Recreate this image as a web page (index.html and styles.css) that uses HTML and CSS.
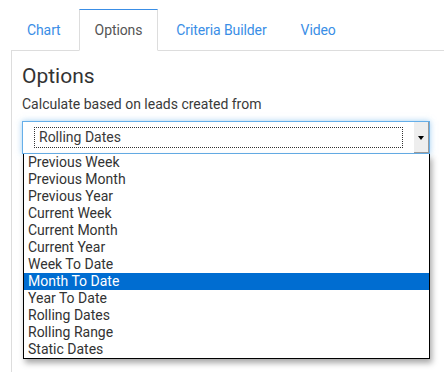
FILE: index.html
```html
<!DOCTYPE html>
<html lang="en">

<head>
    <meta charset="UTF-8">
    <title>Options</title>
    <link rel="stylesheet" href="styles.css">
</head>

<body>
    <ul class="tabs">
        <li><a href="#">Chart</a></li>
        <li class="active"><a href="#">Options</a></li>
        <li><a href="#">Criteria Builder</a></li>
        <li><a href="#">Video</a></li>
    </ul>

    <div class="panel">
        <h3>Options</h3>
        <p class="label">Calculate based on leads created from</p>

        <div class="select">
            <span class="value">Rolling Dates</span>
            <span class="arrow"></span>
        </div>

        <ul class="options">
            <li>Previous Week</li>
            <li>Previous Month</li>
            <li>Previous Year</li>
            <li>Current Week</li>
            <li>Current Month</li>
            <li>Current Year</li>
            <li>Week To Date</li>
            <li class="selected">Month To Date</li>
            <li>Year To Date</li>
            <li>Rolling Dates</li>
            <li>Rolling Range</li>
            <li>Static Dates</li>
        </ul>
    </div>
</body>
</html>
```

FILE: styles.css
```css
body {
    margin: 0;
    padding: 9px 0 0 11px;
    font-family: Roboto, "Liberation Sans", sans-serif;
    font-size: 14px;
    color: #3a3a3a;
    background: #fff;
    height: 363px;
    box-sizing: content-box;
}

.tabs {
    display: flex;
    list-style: none;
    margin: 0;
    padding: 0;
    border-bottom: 1px solid #ddd;
}

.tabs li {
    margin-right: 2px;
    margin-bottom: -1px;
}

.tabs a {
    display: block;
    padding: 10px 15px;
    line-height: 20px;
    border: 1px solid transparent;
    color: #3a8ee6;
    text-decoration: none;
    letter-spacing: -0.1px;
}

.tabs .active a {
    color: #555;
    background: #fff;
    border-color: #ddd;
    border-top-color: #3a8ee6;
    border-bottom-color: #fff;
}

.panel {
    border-left: 1px solid #ddd;
    padding: 12px 14px 0 10px;
    height: 324px;
}

h3 {
    margin: 0;
    font-size: 21px;
    font-weight: 400;
    line-height: 26px;
    color: #333;
}

.label {
    margin: 6px 0 8px;
    font-size: 14px;
    line-height: 18px;
}

.select {
    display: flex;
    align-items: stretch;
    height: 33px;
    box-sizing: border-box;
    border: 1px solid #66afe9;
    box-shadow: 0 0 6px rgba(102, 175, 233, 0.6);
    background: #fff;
}

.select .value {
    flex: 1;
    margin: 5px 11px 5px 11px;
    padding-left: 4px;
    border: 1px dotted #333;
    line-height: 19px;
}

.select .arrow {
    width: 14px;
    background: #eee;
    border-right: 1px solid #999;
    border-bottom: 1px solid #999;
    position: relative;
}

.select .arrow::after {
    content: "";
    position: absolute;
    left: 4px;
    top: 14px;
    border-left: 3px solid transparent;
    border-right: 3px solid transparent;
    border-top: 4px solid #000;
}

.options {
    list-style: none;
    margin: 0 0 0 1px;
    padding: 0;
    border: 1px solid #000;
    border-top: none;
    background: #fff;
    box-shadow: 2px 4px 6px rgba(0, 0, 0, 0.35);
}

.options li {
    height: 17px;
    line-height: 17px;
    padding-left: 4px;
    font-size: 14px;
    color: #333;
}

.options .selected {
    background: #006dd1;
    color: #fff;
}
```
